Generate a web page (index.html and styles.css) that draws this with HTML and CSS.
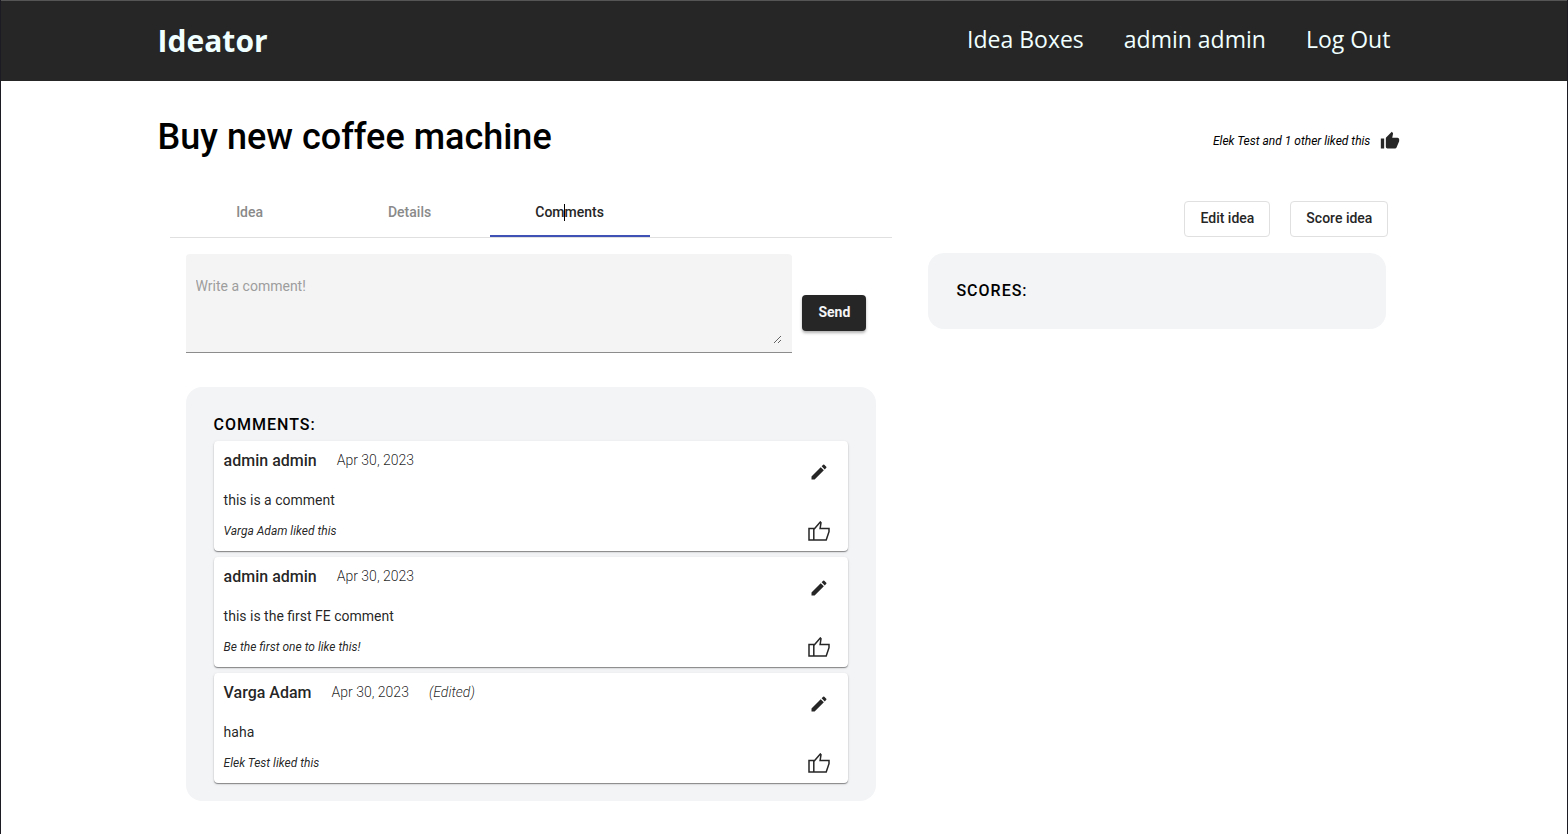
FILE: index.html
```html
<!DOCTYPE html>
<html lang="en">
<head>
<meta charset="utf-8">
<title>Ideator</title>
<link rel="stylesheet" href="styles.css">
</head>
<body>
<svg class="sprite" aria-hidden="true">
  <symbol id="pencil" viewBox="0 0 24 24"><path d="M3 17.250V21h3.750L17.810 9.940l-3.750-3.750L3 17.250zM20.710 7.040a1 1 0 0 0 0-1.410l-2.340-2.340a1 1 0 0 0-1.410 0l-1.830 1.830 3.750 3.750 1.830-1.830z"/></symbol>
  <symbol id="thumb" viewBox="0 0 22 20"><path d="M1 7.500h4.800V19H1zM5.800 8.500 12.300 1l.7.8-.9 5.700H21v3.200L18.200 19H5.800" fill="none" stroke="currentColor" stroke-width="1.500"/></symbol>
  <symbol id="thumb-filled" viewBox="0 0 24 24"><path d="M1 21h4V9H1v12zm22-11c0-1.100-.9-2-2-2h-6.310l.95-4.570.03-.32c0-.41-.17-.79-.44-1.060L14.170 1 7.590 7.590C7.220 7.950 7 8.450 7 9v10c0 1.100.9 2 2 2h9c.83 0 1.540-.5 1.840-1.220l3.020-7.050c.09-.23.14-.47.14-.73v-2z"/></symbol>
</svg>
<header class="topbar">
  <div class="container topbar-inner">
    <a class="brand" href="#">Ideator</a>
    <nav class="nav">
      <a href="#">Idea Boxes</a>
      <a href="#">admin admin</a>
      <a href="#">Log Out</a>
    </nav>
  </div>
</header>
<main class="container">
  <div class="title-row">
    <h1>Buy new coffee machine</h1>
    <div class="idea-likes">
      <span class="likes">Elek Test and 1 other liked this</span>
      <button class="icon-button" aria-label="Like idea"><svg class="icon-filled"><use href="#thumb-filled"/></svg></button>
    </div>
  </div>
  <div class="columns">
    <section>
      <div class="tabs" role="tablist">
        <button class="tab" role="tab">Idea</button>
        <button class="tab" role="tab">Details</button>
        <button class="tab active" role="tab" aria-selected="true">Comments<span class="caret"></span></button>
      </div>
      <div class="tab-body">
        <form class="composer">
          <div class="field">
            <textarea aria-label="Comment" placeholder="Write a comment!"></textarea>
          </div>
          <button class="send" type="button">Send</button>
        </form>
        <div class="panel">
          <h2>COMMENTS:</h2>
          <article class="card">
            <div class="card-text">
              <div class="meta"><h3>admin admin</h3><time>Apr 30, 2023</time></div>
              <p>this is a comment</p>
              <span class="likes">Varga Adam liked this</span>
            </div>
            <div class="card-actions">
              <button class="icon-button" aria-label="Edit comment"><svg class="icon-pencil"><use href="#pencil"/></svg></button>
              <button class="icon-button" aria-label="Like comment"><svg class="icon-thumb"><use href="#thumb"/></svg></button>
            </div>
          </article>
          <article class="card">
            <div class="card-text">
              <div class="meta"><h3>admin admin</h3><time>Apr 30, 2023</time></div>
              <p>this is the first FE comment</p>
              <span class="likes">Be the first one to like this!</span>
            </div>
            <div class="card-actions">
              <button class="icon-button" aria-label="Edit comment"><svg class="icon-pencil"><use href="#pencil"/></svg></button>
              <button class="icon-button" aria-label="Like comment"><svg class="icon-thumb"><use href="#thumb"/></svg></button>
            </div>
          </article>
          <article class="card">
            <div class="card-text">
              <div class="meta"><h3>Varga Adam</h3><time>Apr 30, 2023</time><em>(Edited)</em></div>
              <p>haha</p>
              <span class="likes">Elek Test liked this</span>
            </div>
            <div class="card-actions">
              <button class="icon-button" aria-label="Edit comment"><svg class="icon-pencil"><use href="#pencil"/></svg></button>
              <button class="icon-button" aria-label="Like comment"><svg class="icon-thumb"><use href="#thumb"/></svg></button>
            </div>
          </article>
        </div>
      </div>
    </section>
    <aside>
      <div class="idea-actions">
        <button class="outline">Edit idea</button>
        <button class="outline">Score idea</button>
      </div>
      <div class="panel scores"><h2>SCORES:</h2></div>
    </aside>
  </div>
</main>
</body>
</html>
```
FILE: styles.css
```css
* { box-sizing: border-box; }
body {
  margin: 0;
  min-height: 100vh;
  border: solid #1c1b24;
  border-width: 0 1px;
  background: #fff;
  color: rgba(0, 0, 0, 0.87);
  font: 14px/20px Roboto, sans-serif;
}
h1, h2, h3, p { margin: 0; font-weight: 500; }
button { font: inherit; cursor: pointer; }
.sprite { display: none; }
.container { width: 80%; margin: 0 auto; }

.topbar {
  background: #262626;
  border-top: 1px solid #555;
  font-family: "Open Sans", sans-serif;
}
.topbar-inner { display: flex; justify-content: space-between; align-items: center; height: 80px; }
.topbar a { color: azure; text-decoration: none; }
.brand { font-size: 30px; line-height: 40px; font-weight: 700; }
.nav { display: flex; gap: 40px; padding: 0 20px 4px 0; font-size: 23px; line-height: 30px; }

.title-row { display: flex; justify-content: space-between; align-items: center; height: 108px; padding: 4px 10px 0 0; }
h1 { color: #000; font-size: 36px; line-height: 48px; }
.idea-likes { display: flex; align-items: center; gap: 10px; padding-top: 8px; color: #000; }
.likes { font-size: 12px; line-height: 16px; font-style: italic; }
.icon-button { display: flex; padding: 0; border: 0; background: none; color: #262626; }
.icon-button svg { fill: currentColor; }
.icon-filled { width: 20px; height: 20px; }
.icon-pencil { width: 20px; height: 20px; }
.icon-thumb { width: 22px; height: 20px; }

.columns { display: grid; grid-template-columns: 11fr 7fr; gap: 36px; padding: 0 22px 0 12px; }
.tabs { display: flex; border-bottom: 1px solid #e0e0e0; }
.tab {
  position: relative;
  width: 160px;
  height: 48px;
  padding: 0;
  border: solid transparent;
  border-width: 0 0 2px;
  background: none;
  color: #8a8a8a;
  font-weight: 500;
}
.tab.active { border-color: #3f51b5; color: #262626; }
.caret { position: absolute; left: 74px; top: 15px; width: 1px; height: 17px; background: #000; }

.tab-body { padding: 16px; }
.composer { display: flex; align-items: center; margin-bottom: 34px; }
.field {
  flex: 1;
  margin-right: 10px;
  padding: 22px 10px 8px;
  border-bottom: 1px solid #8c8c8c;
  border-radius: 4px 4px 0 0;
  background: #f4f4f4;
}
textarea {
  display: block;
  width: 100%;
  height: 68px;
  padding: 0;
  border: 0;
  outline: 0;
  background: none;
  font: inherit;
  resize: vertical;
}
textarea::placeholder { color: #9d9d9d; }
.send {
  width: 64px;
  height: 36px;
  margin: 18px 10px 0 0;
  padding: 0 0 2px;
  border: 0;
  border-radius: 4px;
  background: #262626;
  color: #f4f5f7;
  font-weight: 700;
  box-shadow: 0 2px 3px rgba(0, 0, 0, 0.3);
}

.panel { padding: 28px 28px 18px; border-radius: 16px; background: #f3f4f6; }
h2 { color: #000; font-size: 16px; line-height: 20px; letter-spacing: 1px; }
.panel h2 { margin-bottom: 6px; }
.card {
  display: flex;
  justify-content: space-between;
  height: 110px;
  padding: 10px;
  border-radius: 4px;
  background: #fff;
  box-shadow: 0 1px 1px rgba(0, 0, 0, 0.4), 0 1px 3px rgba(0, 0, 0, 0.12);
}
.card + .card { margin-top: 6px; }
.meta { display: flex; gap: 20px; font-weight: 300; line-height: 18px; }
h3 { font-size: 16px; line-height: 20px; }
.card p { margin: 19px 0 13px; font-weight: 400; }
.card .likes { display: block; }
.card-actions { display: flex; flex-direction: column; justify-content: space-between; align-items: center; padding: 11px 8px 0 0; }

.idea-actions { display: flex; justify-content: flex-end; gap: 20px; margin: 12px 0 16px; }
.outline {
  height: 36px;
  padding: 0 15px 2px;
  border: 1px solid #e0e0e0;
  border-radius: 4px;
  background: #fff;
  color: #262626;
  font-weight: 500;
}
.scores { margin-right: 2px; padding-bottom: 22px; }
```
